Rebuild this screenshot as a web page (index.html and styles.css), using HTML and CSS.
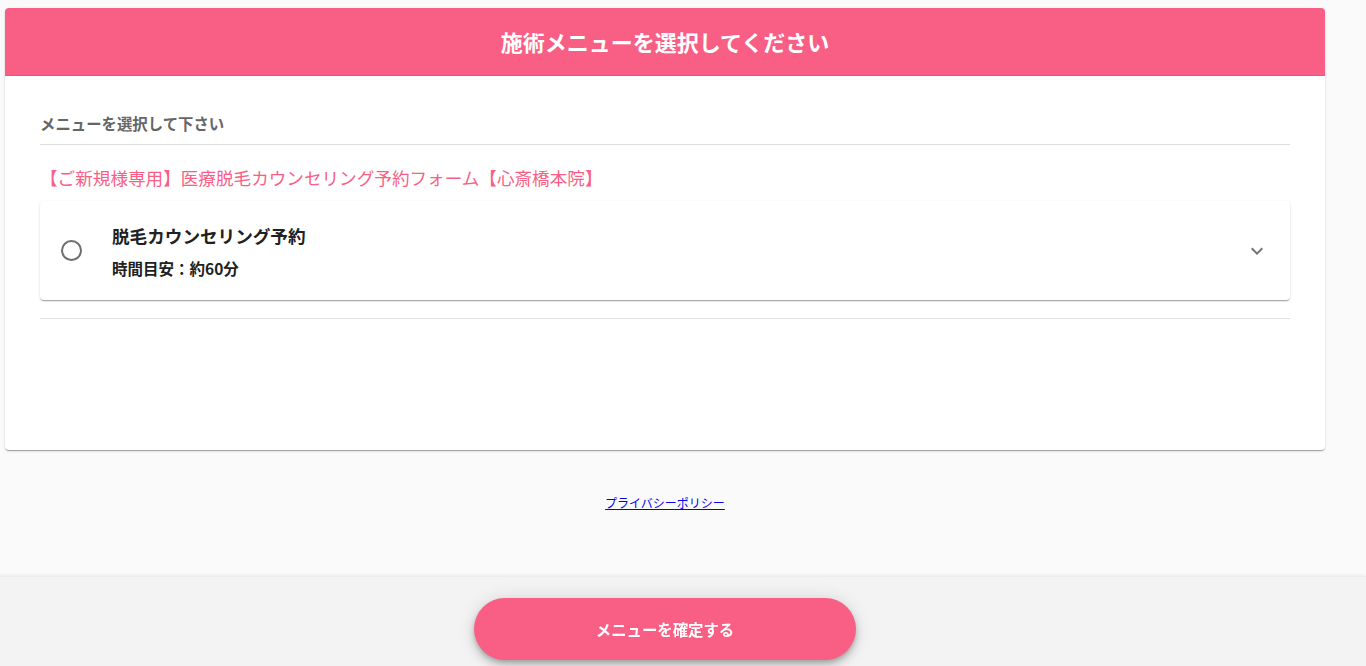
FILE: index.html
```html
<!DOCTYPE html>
<html lang="ja">
<head>
<meta charset="utf-8">
<title>施術メニューを選択してください</title>
<link rel="stylesheet" href="styles.css">
</head>
<body>
<div class="page">
  <section class="card">
    <header class="card-head">
      <h1 class="card-title">施術メニューを選択してください</h1>
    </header>
    <div class="card-body">
      <div class="section-label">メニューを選択して下さい</div>
      <div class="course-name">【ご新規様専用】医療脱毛カウンセリング予約フォーム【心斎橋本院】</div>
      <div class="option">
        <span class="radio"></span>
        <div class="option-text">
          <div class="option-title">脱毛カウンセリング予約</div>
          <div class="option-sub">時間目安：約60分</div>
        </div>
        <svg class="chev" viewBox="0 0 24 24" width="24" height="24" aria-hidden="true"><path d="M7.41 8.59 12 13.17l4.59-4.58L18 10l-6 6-6-6z" fill="#757575"/></svg>
      </div>
      <div class="rule"></div>
    </div>
  </section>
  <div class="privacy"><a href="#">プライバシーポリシー</a></div>
</div>
<footer class="footer">
  <div class="footer-inner">
    <button class="confirm" type="button">メニューを確定する</button>
  </div>
</footer>
</body>
</html>
```

FILE: styles.css
```css
* { box-sizing: border-box; }
html, body { margin: 0; padding: 0; }
body {
  background: #fafafa;
  font-family: "Noto Sans CJK JP", "Noto Sans", sans-serif;
  color: #212121;
  overflow: hidden;
  height: 666px;
}
.page {
  width: 1330px;
  padding: 8px 5px 0 5px;
}
.card {
  background: #fff;
  border-radius: 4px;
  box-shadow: 0 2px 1px -1px rgba(0,0,0,.2), 0 1px 1px 0 rgba(0,0,0,.14), 0 1px 3px 0 rgba(0,0,0,.12);
  overflow: hidden;
  height: 442px;
}
.card-head {
  background: #f95e84;
  height: 68px;
  border-bottom: 1px solid #e9557b;
  display: flex;
  align-items: center;
  justify-content: center;
}
.card-title {
  margin: 0;
  color: #fff;
  font-size: 22px;
  font-weight: 700;
  line-height: 1.4;
}
.card-body {
  padding: 0 35px;
}
.section-label {
  padding-top: 36px;
  padding-bottom: 9px;
  font-size: 15.4px;
  font-weight: 700;
  line-height: 23px;
  color: #666;
  border-bottom: 1px solid #e0e0e0;
}
.course-name {
  margin-top: 20px;
  font-size: 17.6px;
  line-height: 26px;
  color: #f95e84;
}
.option {
  margin-top: 10px;
  height: 99px;
  display: flex;
  align-items: center;
  padding: 0 21px;
  border-radius: 4px;
  background: #fff;
  box-shadow: 0 2px 1px -1px rgba(0,0,0,.2), 0 1px 1px 0 rgba(0,0,0,.14), 0 1px 3px 0 rgba(0,0,0,.12);
}
.radio {
  width: 21px;
  height: 21px;
  border: 2px solid #6e6e6e;
  border-radius: 50%;
  flex: none;
}
.option-text {
  flex: 1;
  margin-left: 30px;
  padding-top: 2px;
}
.option-title {
  font-size: 17.6px;
  font-weight: 700;
  line-height: 26px;
  margin-bottom: 8px;
}
.option-sub {
  font-size: 15.5px;
  font-weight: 700;
  line-height: 23px;
}
.chev { flex: none; }
.rule {
  margin-top: 18px;
  border-top: 1px solid #e0e0e0;
}
.privacy {
  margin-top: 44px;
  text-align: center;
  font-size: 12px;
  line-height: 18px;
}
.privacy a { color: #0000ee; text-decoration: underline; }
.footer {
  position: fixed;
  left: 0;
  right: 0;
  bottom: 0;
  height: 90px;
  background: #f3f3f3;
  box-shadow: 0 -1px 3px rgba(0,0,0,.06);
  border-top: 1px solid #ececec;
}
.footer-inner {
  width: 1330px;
  display: flex;
  justify-content: center;
  padding-top: 21px;
}
.confirm {
  width: 382px;
  height: 62px;
  border: none;
  border-radius: 31px;
  background: #f95e84;
  color: #fff;
  font-family: inherit;
  font-size: 15.4px;
  font-weight: 700;
  box-shadow: 0 3px 5px -1px rgba(0,0,0,.2), 0 6px 10px 0 rgba(0,0,0,.14), 0 1px 18px 0 rgba(0,0,0,.12);
}
```
